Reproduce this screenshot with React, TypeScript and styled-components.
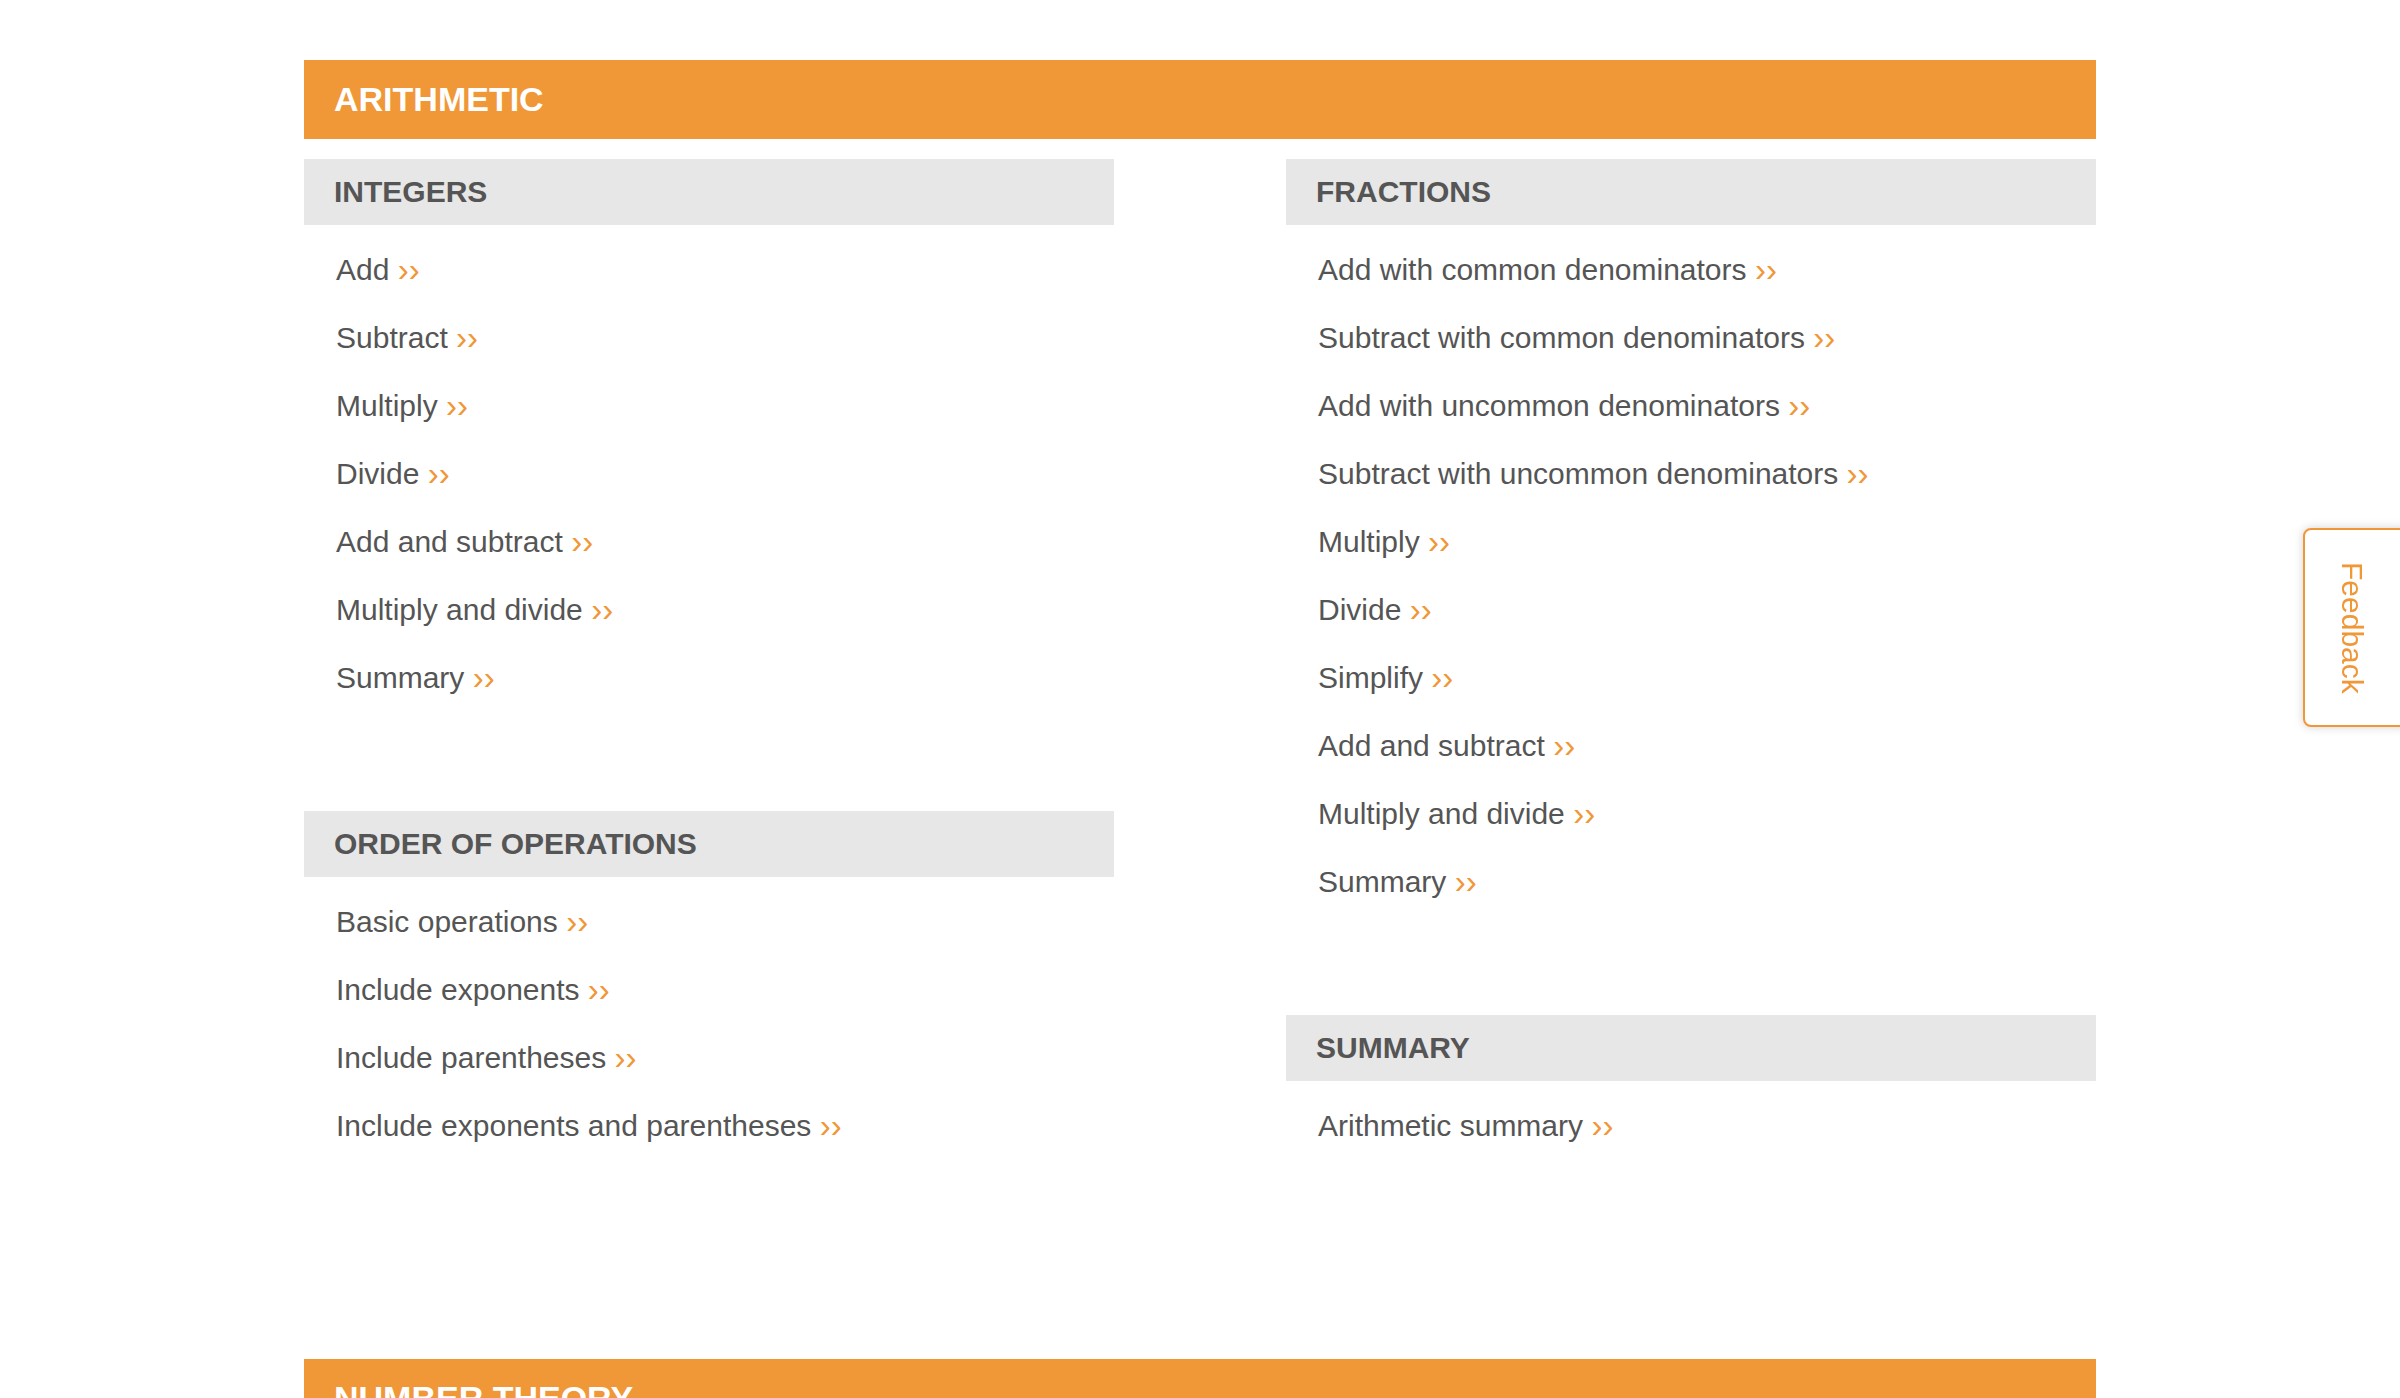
import React from "react";
import styled, { createGlobalStyle } from "styled-components";

const ORANGE = "#F09738";
const TEXT = "#555555";

const GlobalStyle = createGlobalStyle`
  html, body {
    margin: 0;
    padding: 0;
    background: #ffffff;
  }
  body {
    font-family: "Liberation Sans", Arial, Helvetica, sans-serif;
    color: ${TEXT};
  }
  * { box-sizing: border-box; }
`;

const Page = styled.div`
  width: 1792px;
  margin: 0 auto;
  padding-top: 60px;
`;

const Block = styled.section`
  margin-bottom: 100px;
`;

const Banner = styled.h1`
  margin: 0;
  height: 79px;
  line-height: 79px;
  padding-left: 30px;
  background: ${ORANGE};
  color: #ffffff;
  font-size: 34px;
  font-weight: 700;
  text-transform: uppercase;
`;

const Columns = styled.div`
  display: grid;
  grid-template-columns: 810px 810px;
  column-gap: 172px;
  margin-top: 20px;
  align-items: start;
`;

const Column = styled.div`
  display: flex;
  flex-direction: column;
`;

const Section = styled.div`
  margin-bottom: 100px;
`;

const SectionTitle = styled.h2`
  margin: 0;
  height: 66px;
  line-height: 66px;
  padding-left: 30px;
  background: #e7e7e7;
  color: ${TEXT};
  font-size: 30px;
  font-weight: 700;
  text-transform: uppercase;
`;

const List = styled.ul`
  list-style: none;
  margin: 10px 0 0;
  padding: 0 0 0 32px;
`;

const Item = styled.li`
  height: 68px;
  line-height: 68px;
  font-size: 30px;
  color: ${TEXT};
  white-space: nowrap;
`;

const Link = styled.a`
  color: inherit;
  text-decoration: none;
`;

const Chevrons = styled.span`
  color: ${ORANGE};
  font-size: 33px;
  position: relative;
  top: 1px;
`;

const FeedbackTab = styled.button`
  position: fixed;
  top: 528px;
  right: -8px;
  width: 105px;
  height: 199px;
  padding: 0 8px 0 0;
  background: #ffffff;
  border: 2px solid ${ORANGE};
  border-radius: 8px 0 0 8px;
  box-shadow: 0 0 10px rgba(0, 0, 0, 0.18);
  display: flex;
  align-items: center;
  justify-content: center;
  cursor: pointer;
`;

const FeedbackLabel = styled.span`
  writing-mode: vertical-rl;
  font-family: "Liberation Sans", Arial, Helvetica, sans-serif;
  font-size: 30px;
  color: ${ORANGE};
  line-height: 1;
`;

type SectionData = { title: string; items: string[] };

const integers: SectionData = {
  title: "Integers",
  items: [
    "Add",
    "Subtract",
    "Multiply",
    "Divide",
    "Add and subtract",
    "Multiply and divide",
    "Summary",
  ],
};

const order: SectionData = {
  title: "Order of operations",
  items: [
    "Basic operations",
    "Include exponents",
    "Include parentheses",
    "Include exponents and parentheses",
  ],
};

const fractions: SectionData = {
  title: "Fractions",
  items: [
    "Add with common denominators",
    "Subtract with common denominators",
    "Add with uncommon denominators",
    "Subtract with uncommon denominators",
    "Multiply",
    "Divide",
    "Simplify",
    "Add and subtract",
    "Multiply and divide",
    "Summary",
  ],
};

const summary: SectionData = {
  title: "Summary",
  items: ["Arithmetic summary"],
};

function TopicSection({ data }: { data: SectionData }) {
  return (
    <Section>
      <SectionTitle>{data.title}</SectionTitle>
      <List>
        {data.items.map((it) => (
          <Item key={it}>
            <Link href="#">
              {it} <Chevrons>{"\u203A\u203A"}</Chevrons>
            </Link>
          </Item>
        ))}
      </List>
    </Section>
  );
}

export default function App() {
  return (
    <>
      <GlobalStyle />
      <Page>
        <Block>
          <Banner>Arithmetic</Banner>
          <Columns>
            <Column>
              <TopicSection data={integers} />
              <TopicSection data={order} />
            </Column>
            <Column>
              <TopicSection data={fractions} />
              <TopicSection data={summary} />
            </Column>
          </Columns>
        </Block>
        <Block>
          <Banner>Number theory</Banner>
        </Block>
      </Page>
      <FeedbackTab type="button">
        <FeedbackLabel>Feedback</FeedbackLabel>
      </FeedbackTab>
    </>
  );
}
